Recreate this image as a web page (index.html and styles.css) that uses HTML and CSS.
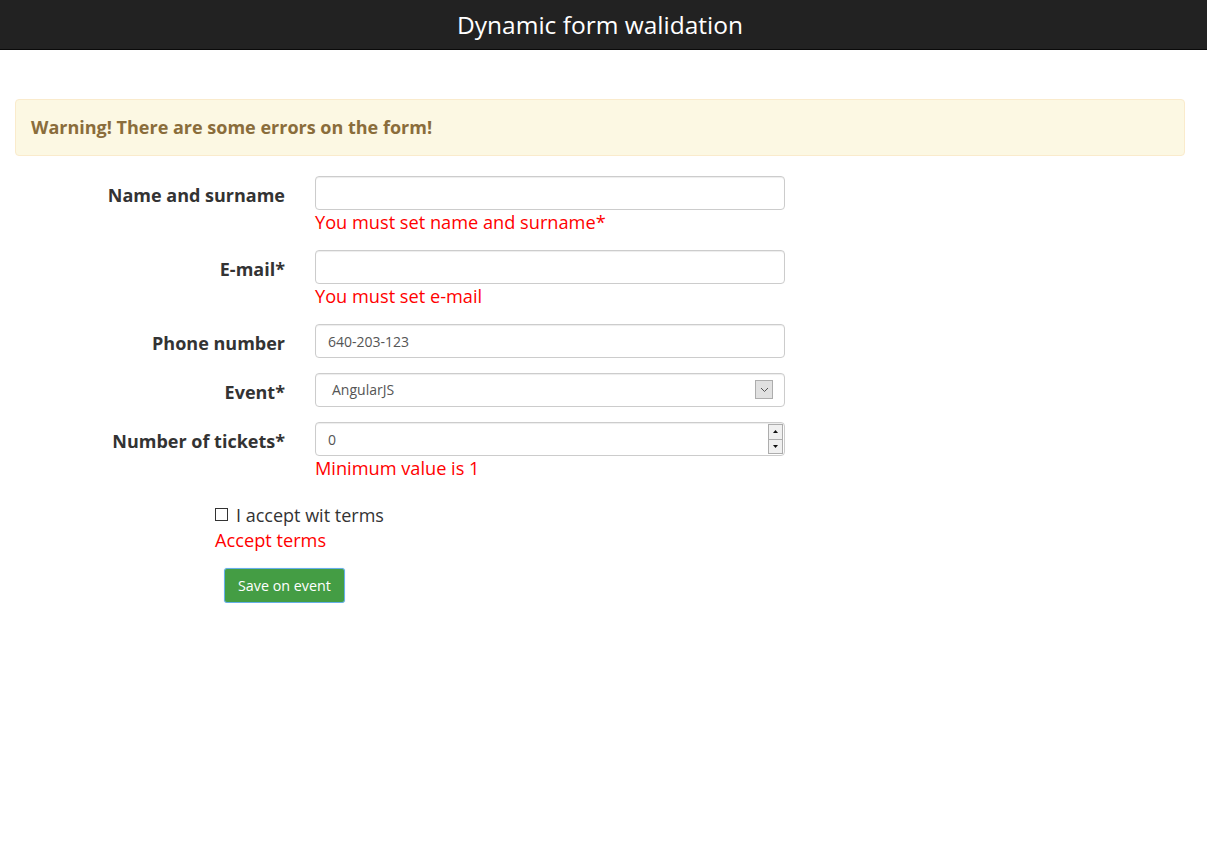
FILE: index.html
```html
<!DOCTYPE html>
<html>
<head>
<meta charset="utf-8">
<title>Dynamic form walidation</title>
<link rel="stylesheet" href="styles.css">
</head>
<body>
<header class="topbar">Dynamic form walidation</header>
<main class="container">
  <div class="alert">Warning! There are some errors on the form!</div>
  <form class="form">
    <div class="group">
      <label class="label">Name and surname</label>
      <div class="field">
        <input class="input" type="text" value="">
        <div class="error">You must set name and surname*</div>
      </div>
    </div>
    <div class="group">
      <label class="label">E-mail*</label>
      <div class="field">
        <input class="input" type="text" value="">
        <div class="error">You must set e-mail</div>
      </div>
    </div>
    <div class="group">
      <label class="label">Phone number</label>
      <div class="field">
        <input class="input" type="text" value="640-203-123">
      </div>
    </div>
    <div class="group">
      <label class="label">Event*</label>
      <div class="field">
        <div class="select-wrap">
          <div class="input select">AngularJS</div>
          <span class="select-btn"><svg width="9" height="6" viewBox="0 0 9 6"><path d="M1 1 L4.5 4.5 L8 1" fill="none" stroke="#555" stroke-width="1"/></svg></span>
        </div>
      </div>
    </div>
    <div class="group">
      <label class="label">Number of tickets*</label>
      <div class="field">
        <div class="number-wrap">
          <input class="input" type="text" value="0">
          <span class="spin">
            <span class="spin-btn"><svg width="5" height="3" viewBox="0 0 5 3"><path d="M0 3 L2.5 0 L5 3 Z" fill="#111"/></svg></span>
            <span class="spin-btn"><svg width="5" height="3" viewBox="0 0 5 3"><path d="M0 0 L2.5 3 L5 0 Z" fill="#111"/></svg></span>
          </span>
        </div>
        <div class="error">Minimum value is 1</div>
      </div>
    </div>
    <div class="terms">
      <label class="check"><span class="box"></span>I accept wit terms</label>
      <div class="error">Accept terms</div>
      <button class="btn" type="button">Save on event</button>
    </div>
  </form>
</main>
</body>
</html>
```

FILE: styles.css
```css
* { box-sizing: border-box; }
html, body { margin: 0; padding: 0; background: #fff; }
body {
  font-family: "Open Sans", "Liberation Sans", sans-serif;
  color: #333;
  font-size: 14px;
  line-height: 1.428571;
}
.topbar {
  height: 50px;
  background: #222;
  border-bottom: 1px solid #0a0a0a;
  color: #fff;
  font-size: 24.5px;
  text-align: center;
  line-height: 49px;
  padding-right: 7px;
}
.container { padding: 49px 22px 0 15px; }
.alert {
  background: #fcf8e3;
  border: 1px solid #faebcc;
  border-radius: 4px;
  color: #8a6d3b;
  font-weight: 700;
  font-size: 18px;
  padding: 15px 15px;
  height: 57px;
  line-height: 25px;
  margin-bottom: 20px;
}
.form { display: flex; flex-direction: column; }
.group { display: flex; margin-bottom: 15px; }
.label {
  width: 300px;
  margin-left: -15px;
  padding-right: 15px;
  text-align: right;
  font-weight: 700;
  font-size: 18px;
  padding-top: 6px;
  line-height: 26px;
  flex: none;
}
.field { margin-left: 15px; width: 470px; }
.input {
  display: block;
  width: 470px;
  height: 34px;
  padding: 6px 12px;
  font-family: "Open Sans", "Liberation Sans", sans-serif;
  font-size: 14px;
  color: #555;
  border: 1px solid #ccc;
  border-radius: 4px;
  box-shadow: inset 0 1px 1px rgba(0,0,0,.075);
  background: #fff;
  outline: none;
}
.error {
  color: #f00;
  font-size: 18.2px;
  line-height: 25px;
}
.select-wrap, .number-wrap { position: relative; }
.select { padding-left: 16px; line-height: 20px; }
.select-btn {
  position: absolute;
  right: 12px;
  top: 7px;
  width: 18px;
  height: 19px;
  background: #e1e1e1;
  border: 1px solid #adadad;
  display: flex;
  align-items: center;
  justify-content: center;
}
.spin {
  position: absolute;
  right: 2px;
  top: 2px;
  width: 15px;
  height: 30px;
  display: flex;
  flex-direction: column;
}
.spin-btn {
  flex: 1;
  background: #f0f0f0;
  border: 1px solid #adadad;
  display: flex;
  align-items: center;
  justify-content: center;
}
.spin-btn + .spin-btn { border-top: none; }
.terms {
  margin-left: 200px;
  padding-top: 7px;
  display: flex;
  flex-direction: column;
  align-items: flex-start;
}
.check {
  font-size: 18px;
  line-height: 25px;
  display: flex;
  align-items: center;
  color: #333;
}
.box {
  width: 13px;
  height: 13px;
  border: 1px solid #333;
  margin-right: 8px;
  background: #fff;
  margin-top: -2px;
}
.btn {
  margin-top: 15px;
  margin-left: 9px;
  height: 35px;
  padding: 6px 13px;
  font-family: "Open Sans", "Liberation Sans", sans-serif;
  font-size: 14.3px;
  color: #fff;
  background: #449d44;
  border: 1px solid #66afe9;
  border-radius: 3px;
  box-shadow: 0 0 1px rgba(102,175,233,.6);
}
```
